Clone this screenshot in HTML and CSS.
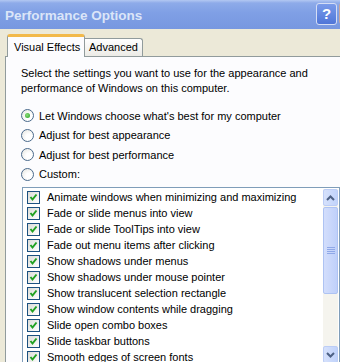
FILE: index.html
```html
<!DOCTYPE html>
<html lang="en">
<head>
    <meta charset="UTF-8">
    <meta name="viewport" content="width=device-width, initial-scale=1.0">
    <title>Performance Options</title>
    <link rel="stylesheet" href="styles.css">
</head>
<body>
    <div class="window">
        <div class="titlebar">
            <span class="title">Performance Options</span>
            <div class="title-buttons">
                <span class="help-btn">?</span>
                <span class="close-btn"></span>
            </div>
        </div>

        <div class="dialog">
            <div class="tabs">
                <div class="tab active">Visual Effects</div>
                <div class="tab">Advanced</div>
            </div>

            <div class="panel">
                <p class="intro">Select the settings you want to use for the appearance and<br>performance of Windows on this computer.</p>

                <ul class="options">
                    <li class="option"><span class="radio checked"></span>Let Windows choose what's best for my computer</li>
                    <li class="option"><span class="radio"></span>Adjust for best appearance</li>
                    <li class="option"><span class="radio"></span>Adjust for best performance</li>
                    <li class="option"><span class="radio"></span>Custom:</li>
                </ul>

                <div class="listbox">
                    <ul class="effects" id="effects"></ul>
                    <div class="scrollbar">
                        <div class="sb-btn">
                            <svg width="9" height="6" viewBox="0 0 9 6"><path d="M1 5 L4.5 1.5 L8 5" fill="none" stroke="#4d6185" stroke-width="2"/></svg>
                        </div>
                        <div class="sb-thumb">
                            <svg width="8" height="7" viewBox="0 0 8 7"><path d="M0 0.5h8M0 2.5h8M0 4.5h8M0 6.5h8" stroke="#8fa8e8" stroke-width="1"/></svg>
                        </div>
                        <div class="sb-track"></div>
                        <div class="sb-btn">
                            <svg width="9" height="6" viewBox="0 0 9 6"><path d="M1 1 L4.5 4.5 L8 1" fill="none" stroke="#4d6185" stroke-width="2"/></svg>
                        </div>
                    </div>
                </div>
            </div>
        </div>
    </div>

    <script>
        // visual effect settings, all switched on
        const effects = [
            'Animate windows when minimizing and maximizing',
            'Fade or slide menus into view',
            'Fade or slide ToolTips into view',
            'Fade out menu items after clicking',
            'Show shadows under menus',
            'Show shadows under mouse pointer',
            'Show translucent selection rectangle',
            'Show window contents while dragging',
            'Slide open combo boxes',
            'Slide taskbar buttons',
            'Smooth edges of screen fonts'
        ];

        const list = document.getElementById('effects');
        effects.forEach(function(name) {
            const li = document.createElement('li');
            li.className = 'effect';
            li.innerHTML = '<span class="checkbox"><svg width="11" height="11" viewBox="0 0 11 11">' +
                '<path d="M2.5 5 L4.5 7.5 L8.5 2.5" fill="none" stroke="#21a121" stroke-width="2"/></svg></span>' + name;
            list.appendChild(li);
        });
    </script>
</body>
</html>
```

FILE: styles.css
```css
body {
    margin: 0;
    width: 340px;
    height: 362px;
    overflow: hidden;
    background-color: #ece9d8;
    font-family: "Liberation Sans", Arial, sans-serif;
    font-size: 11px;
    color: #000;
}
ul {
    list-style: none;
    margin: 0;
    padding: 0;
}
.titlebar {
    height: 29px;
    display: flex;
    align-items: center;
    justify-content: space-between;
    background: linear-gradient(to bottom, #b3c8f2 0, #8eabe9 3px, #7f9fe5 45%, #7797e0 100%);
}
.title {
    padding-left: 5px;
    padding-top: 1px;
    font-size: 13.5px;
    font-weight: bold;
    color: #dbe5f8;
}
.title-buttons {
    display: flex;
    gap: 2px;
    align-self: flex-start;
    margin-top: 3px;
    width: 24px;
    overflow: hidden;
}
.help-btn {
    flex: none;
    width: 19px;
    height: 20px;
    border: 1px solid #d5def5;
    border-radius: 3px;
    background: linear-gradient(to bottom, #7a9bea, #4f76d8);
    color: #fff;
    font-size: 15px;
    font-weight: bold;
    line-height: 20px;
    text-align: center;
}
.close-btn {
    flex: none;
    width: 21px;
    height: 21px;
    border-radius: 3px;
    background: #c8a69c;
}
.dialog {
    padding-top: 5px;
}
.tabs {
    display: flex;
    align-items: flex-end;
    padding-left: 7px;
}
.tab {
    height: 17px;
    padding: 0 4px;
    border: 1px solid #919b9c;
    border-bottom: none;
    border-left: none;
    border-radius: 0 3px 0 0;
    background: linear-gradient(to bottom, #ffffff, #ecebe6);
    line-height: 17px;
}
.tab.active {
    position: relative;
    z-index: 1;
    width: 70px;
    height: 20px;
    padding: 0 0 0 6px;
    margin-bottom: -1px;
    border-left: 1px solid #919b9c;
    border-top: 3px solid #f2b94a;
    border-radius: 3px 3px 0 0;
    background: #fcfcfe;
    line-height: 20px;
}
.panel {
    margin-left: 5px;
    padding: 9px 0 0 15px;
    height: 320px;
    border: 1px solid #919b9c;
    border-right: none;
    background: #fcfcfe;
}
.intro {
    margin: 0 0 10px;
    line-height: 15px;
}
.option {
    display: flex;
    align-items: center;
    height: 19.5px;
}
.radio {
    width: 11px;
    height: 11px;
    margin-right: 5px;
    border: 1px solid #4a6a8c;
    border-radius: 50%;
    background: radial-gradient(circle at 65% 65%, #ffffff 30%, #e2e2dc 100%);
    display: flex;
    align-items: center;
    justify-content: center;
}
.radio.checked::after {
    content: "";
    width: 5px;
    height: 5px;
    border-radius: 50%;
    background: radial-gradient(circle at 40% 40%, #8fdc7a, #21a121);
}
.listbox {
    display: flex;
    margin: 3px 0 0 1px;
    width: 316px;
    height: 180px;
    border: 1px solid #7f9db9;
    background: #fff;
}
.effects {
    flex: 1;
    padding: 1px 0 0 4px;
}
.effect {
    display: flex;
    align-items: center;
    height: 16px;
}
.checkbox {
    width: 11px;
    height: 11px;
    margin-right: 7px;
    border: 1px solid #1c5180;
    background: linear-gradient(135deg, #dcdcd7, #ffffff);
}
.checkbox svg {
    display: block;
}
.scrollbar {
    display: flex;
    flex-direction: column;
    width: 15px;
    height: 174px;
    margin: 1px 1px 0 0;
    background: #f5f4ee;
}
.sb-btn {
    height: 15px;
    border: 1px solid #bccdf6;
    border-radius: 2px;
    background: linear-gradient(to right, #d6e1fb, #c1d3fb);
    display: flex;
    align-items: center;
    justify-content: center;
}
.sb-thumb {
    height: 85px;
    margin-top: 1px;
    border: 1px solid #aec3f3;
    border-radius: 2px;
    background: linear-gradient(to right, #d3defc, #bfd0fa);
    display: flex;
    align-items: center;
    justify-content: center;
}
.sb-track {
    flex: 1;
}
```
